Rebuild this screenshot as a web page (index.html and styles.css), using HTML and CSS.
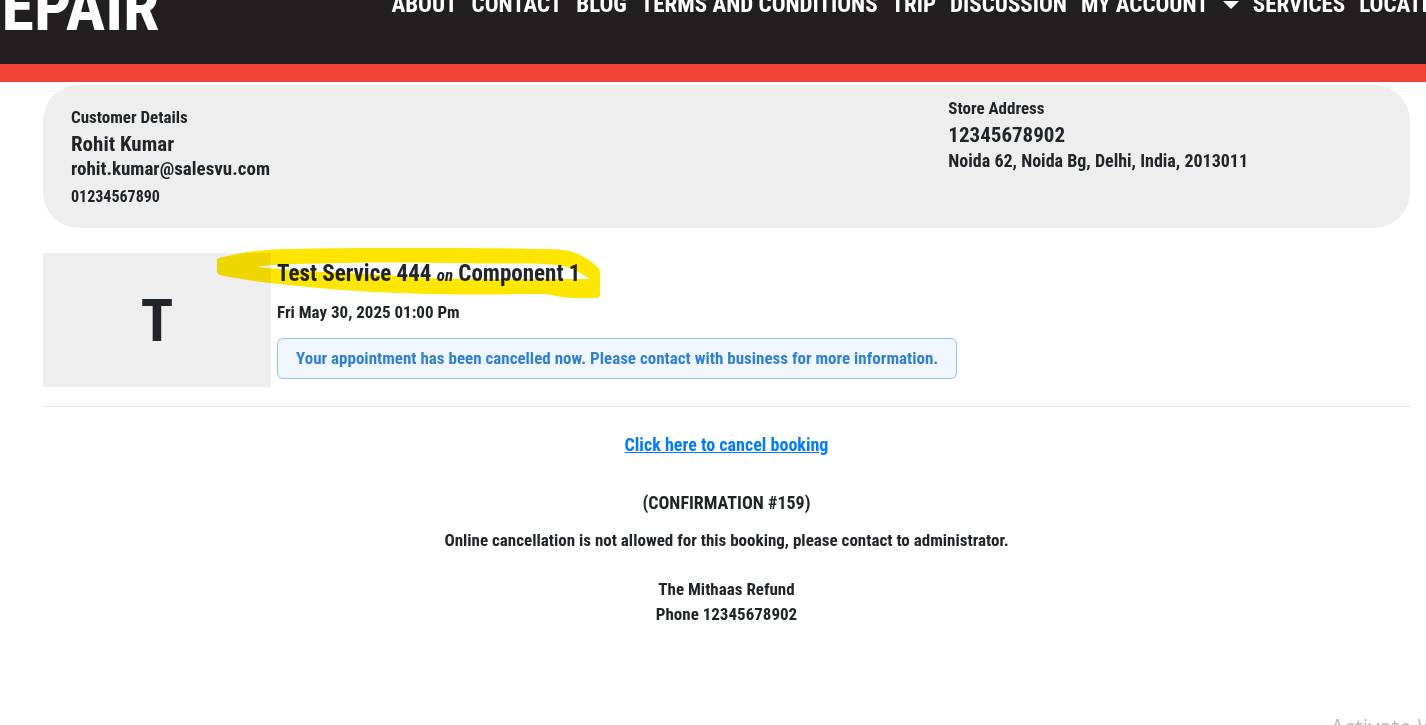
FILE: index.html
```html
<!DOCTYPE html>
<html lang="en">
  <head>
    <meta charset="UTF-8" />
    <meta name="viewport" content="width=device-width, initial-scale=1.0" />
    <title>Booking Confirmation</title>
    <link rel="stylesheet" href="styles.css">
  </head>
  <body>
    <header class="site-header">
      <a class="logo" href="#">REPAIR</a>
      <nav class="main-nav">
        <a href="#">ABOUT</a>
        <a href="#">CONTACT</a>
        <a href="#">BLOG</a>
        <a href="#">TERMS AND CONDITIONS</a>
        <a href="#">TRIP</a>
        <a href="#">DISCUSSION</a>
        <a class="has-menu" href="#">MY ACCOUNT
          <svg class="caret" viewBox="0 0 16 8" aria-hidden="true"><path d="M0 0h16L8 8z" /></svg>
        </a>
        <a href="#">SERVICES</a>
        <a href="#">LOCATIONS</a>
      </nav>
    </header>

    <main class="booking">
      <section class="details">
        <div class="customer">
          <h2 class="label">Customer Details</h2>
          <p class="name">Rohit Kumar</p>
          <p class="email">rohit.kumar@salesvu.com</p>
          <p class="phone">01234567890</p>
        </div>
        <div class="store">
          <h2 class="label">Store Address</h2>
          <p class="store-name">12345678902</p>
          <p class="address">Noida 62, Noida Bg, Delhi, India, 2013011</p>
        </div>
      </section>

      <section class="service">
        <div class="thumb">T</div>
        <div class="service-info">
          <h1 class="service-title">
            Test Service 444 <em>on</em> Component 1
            <svg class="marker" viewBox="0 0 383 50" aria-hidden="true">
              <path fill-rule="evenodd" d="M2 10C10 8 20 6 30 4C45 2 60 1 76 1C110 0 145 0 176 0C230 0 290 0 326 1C340 1 350 2 356 4C366 8 372 12 376 15C381 19 383 21 383 25V46Q383 50 379 50H356C344 50 338 47 328 46C290 46 250 47 210 46C170 45 140 43 113 41C90 39 70 37 53 35C35 33 18 30 3 27Q0 26 0 24V13Q0 10 2 10ZM40 19C90 24 140 25 183 28C215 31 250 31 290 31H373C363 25 354 18 339 17C325 15 280 16 226 15C170 14 120 15 80 16C65 16 50 17 40 19Z" />
            </svg>
          </h1>
          <p class="service-date">Fri May 30, 2025 01:00 Pm</p>
          <p class="notice">Your appointment has been cancelled now. Please contact with business for more information.</p>
        </div>
      </section>

      <section class="confirmation">
        <a class="cancel-link" href="#">Click here to cancel booking</a>
        <p class="number">(CONFIRMATION #159)</p>
        <p class="message">Online cancellation is not allowed for this booking, please contact to administrator.</p>
        <p>The Mithaas Refund</p>
        <p>Phone 12345678902</p>
      </section>
    </main>

    <div class="watermark">Activate Windows</div>
  </body>
</html>
```

FILE: styles.css
```css
* {
  margin: 0;
  padding: 0;
  box-sizing: border-box;
}

body {
  font-family: "Roboto Condensed", "Liberation Sans Narrow", "Liberation Sans", sans-serif;
  font-size: 17px;
  font-weight: 700;
  line-height: 25px;
  color: #212529;
  background: #ffffff;
  overflow: hidden;
}

.site-header {
  display: flex;
  align-items: flex-end;
  gap: 232px;
  margin-top: -56px;
  padding-bottom: 20px;
  background: #231f20;
  border-bottom: 18px solid #ef4136;
}

.site-header a {
  color: #ffffff;
  text-decoration: none;
  white-space: nowrap;
}

.logo {
  margin-left: -35px;
  padding: 34px 0 6px;
  font-size: 66px;
  line-height: 60px;
}

.main-nav {
  display: flex;
  gap: 14px;
  padding-bottom: 25px;
  font-size: 23px;
  line-height: 28px;
}

.has-menu {
  display: flex;
  align-items: center;
  gap: 14px;
}

.caret {
  width: 16px;
  height: 8px;
  fill: #ffffff;
}

.booking {
  padding: 3px 16px 0 43px;
}

.details {
  display: flex;
  gap: 10px;
  padding: 10px 28px 18px;
  background: #eeeeee;
  border-radius: 36px;
}

.customer {
  flex: 2;
  padding-top: 9px;
}

.store {
  flex: 1;
}

.label {
  font-size: 17px;
  line-height: 27px;
}

.name,
.store-name {
  font-size: 21px;
  line-height: 26px;
}

.email {
  font-size: 19px;
  line-height: 23px;
}

.address {
  font-size: 18px;
}

.phone {
  padding: 4px 0 1px;
  font-size: 16px;
}

.service {
  display: flex;
  gap: 6px;
  margin-top: 25px;
  padding-bottom: 19px;
  border-bottom: 1px solid #e5e5e5;
}

.thumb {
  display: flex;
  flex: 0 0 228px;
  align-items: center;
  justify-content: center;
  height: 134px;
  background: #eeeeee;
  font-size: 60px;
}

.service-title {
  position: relative;
  font-size: 23px;
  line-height: 42px;
}

.service-title em {
  font-size: 17px;
}

/* highlighter stroke lying over the service title */
.marker {
  position: absolute;
  top: -5px;
  left: -60px;
  width: 383px;
  height: 50px;
  fill: #ffe600;
  mix-blend-mode: multiply;
}

.service-date {
  padding: 4px 0 13px;
}

.notice {
  padding: 7px 18px;
  color: #3182ce;
  background: #eff7fd;
  border: 1px solid #90c4e4;
  border-radius: 6px;
}

.confirmation {
  padding-top: 25px;
  text-align: center;
}

.cancel-link {
  color: #007bff;
  font-size: 18px;
}

.number {
  padding: 32px 0 13px;
  font-size: 18px;
}

.message {
  padding-bottom: 24px;
}

.watermark {
  position: fixed;
  right: -85px;
  bottom: -16px;
  color: #bbbbbb;
  font-family: "Open Sans", sans-serif;
  font-size: 22px;
  font-weight: 400;
  line-height: 30px;
}
```
